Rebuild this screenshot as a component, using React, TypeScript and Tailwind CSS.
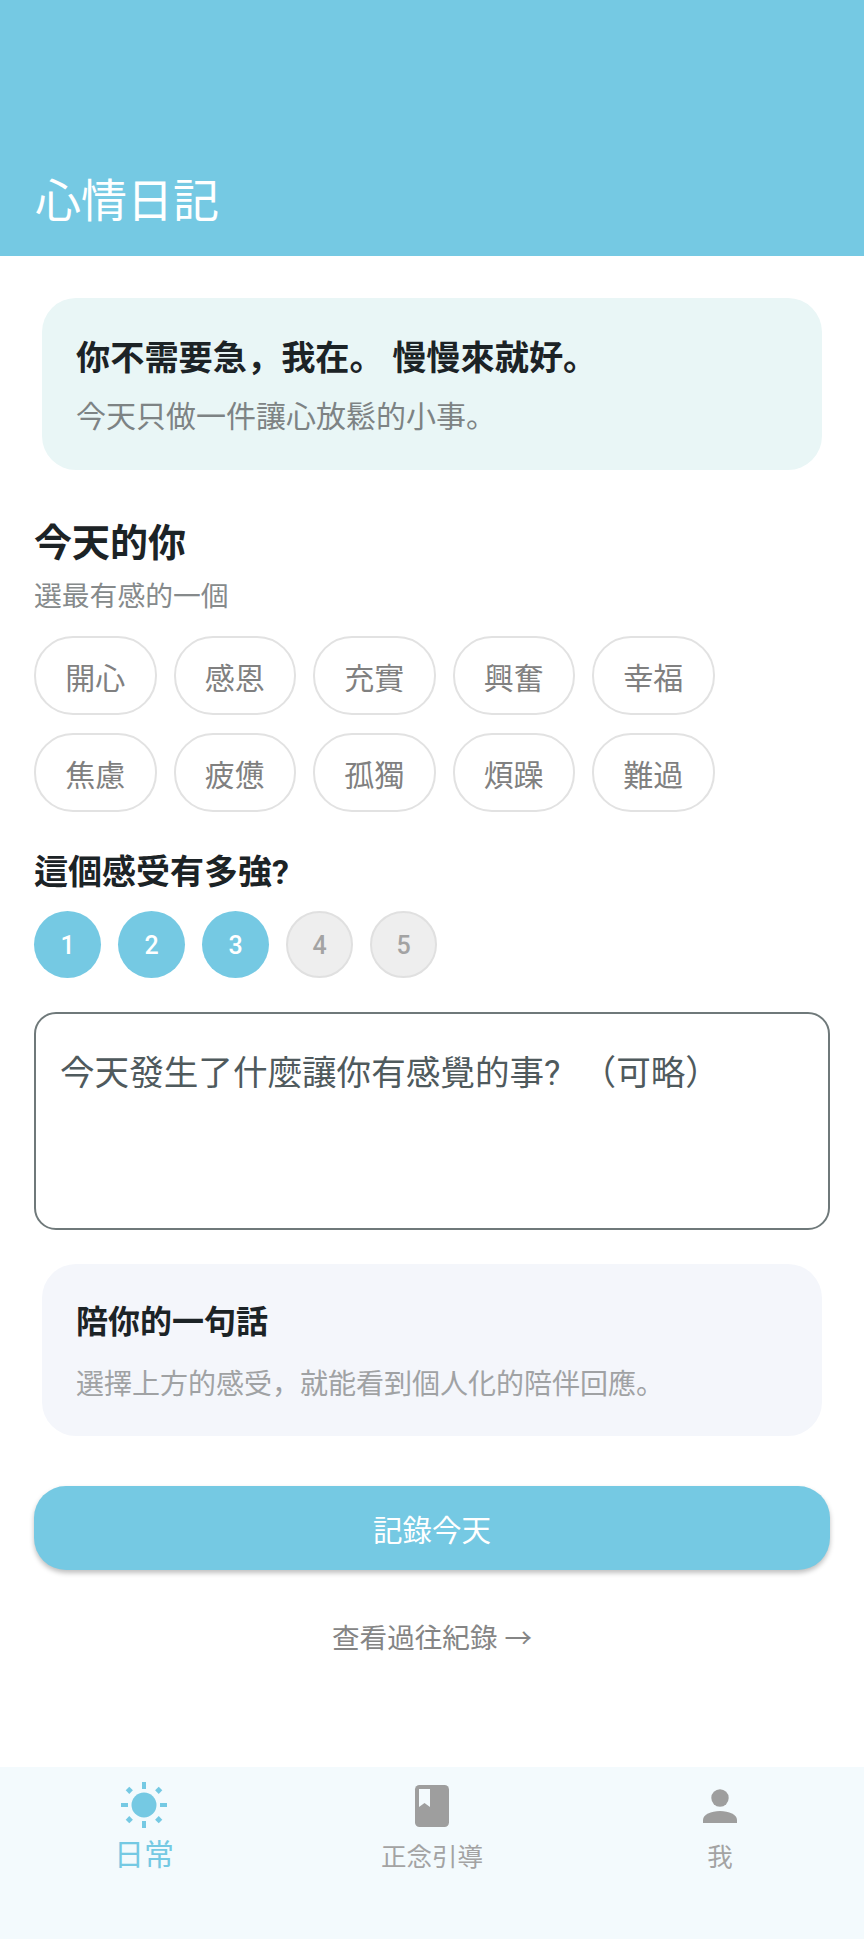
const font = "font-['Roboto','Noto_Sans_CJK_JP',sans-serif]";

const moods = ["開心", "感恩", "充實", "興奮", "幸福", "焦慮", "疲憊", "孤獨", "煩躁", "難過"];

function SunIcon() {
  return (
    <svg width="50" height="50" viewBox="0 0 50 50" fill="#75c9e3">
      <circle cx="25" cy="25" r="12.5" />
      <rect x="23" y="2" width="4" height="7" />
      <rect x="23" y="41" width="4" height="7" />
      <rect x="2" y="23" width="7" height="4" />
      <rect x="41" y="23" width="7" height="4" />
      <path d="M10.3 6.7l3.600 3.600-3.600 3.600-3.600-3.600z" />
      <path d="M39.700 6.700l3.600 3.600-3.600 3.600-3.600-3.600z" />
      <path d="M10.300 36.100l3.600 3.600-3.600 3.600-3.600-3.600z" />
      <path d="M39.700 36.100l3.600 3.600-3.600 3.600-3.600-3.600z" />
    </svg>
  );
}

function BookIcon() {
  return (
    <svg width="50" height="50" viewBox="0 0 50 50">
      <rect x="8" y="5" width="34" height="42" rx="4.500" fill="#9e9e9e" />
      <path d="M12 9h11v18l-5.500-4L12 27z" fill="#f3fafd" />
    </svg>
  );
}

function PersonIcon() {
  return (
    <svg width="50" height="50" viewBox="0 0 50 50" fill="#9e9e9e">
      <circle cx="25" cy="18" r="8.700" />
      <path d="M8 43v-3C8 34.500 16 31 25 31s17 3.500 17 9v3z" />
    </svg>
  );
}

export default function App() {
  return (
    <div className={`${font} flex h-[1939px] w-[864px] flex-col bg-white`}>
      <header className="flex h-[256px] items-end bg-[#75c9e3] pb-[27px] pl-[35px]">
        <h1 className="text-[46px] leading-[56px] font-normal text-white">心情日記</h1>
      </header>

      <main className="flex-1 px-[34px] pt-[42px]">
        <section className="mx-[8px] h-[172px] rounded-[34px] bg-[#e9f6f6] px-[34px] pt-[36px]">
          <p className="text-[34.2px] leading-[48px] font-bold text-[#1c2326]">你不需要急，我在。 慢慢來就好。</p>
          <p className="mt-[15px] text-[30px] leading-[40px] text-[#7d8384]">今天只做一件讓心放鬆的小事。</p>
        </section>

        <h2 className="mt-[48px] text-[38px] leading-[50px] font-bold text-[#1c2326]">今天的你</h2>
        <p className="mt-[10px] text-[27.8px] leading-[38px] text-[#868a8b]">選最有感的一個</p>

        <div className="mt-[20px] flex flex-wrap gap-x-[17px] gap-y-[18px] pr-[80px]">
          {moods.map((m) => (
            <button
              key={m}
              className="flex h-[79px] w-[122.5px] items-center justify-center rounded-[39px] border-2 border-[#e2e2e2] bg-white pt-[6px] text-[30px] text-[#808080]"
            >
              {m}
            </button>
          ))}
        </div>

        <h3 className="mt-[37px] text-[34px] leading-[46px] font-bold text-[#1c2326]">這個感受有多強?</h3>

        <div className="mt-[16px] flex gap-[17px]">
          {[1, 2, 3].map((n) => (
            <div
              key={n}
              className="flex size-[67px] items-center justify-center rounded-full bg-[#75c9e3] pt-[2px] text-[25px] font-medium text-white"
            >
              {n}
            </div>
          ))}
          {[4, 5].map((n) => (
            <div
              key={n}
              className="flex size-[67px] items-center justify-center rounded-full border-2 border-[#e0e0e0] bg-[#eeeeee] pt-[2px] text-[25px] font-medium text-[#a3a3a3]"
            >
              {n}
            </div>
          ))}
        </div>

        <textarea
          readOnly
          placeholder={"今天發生了什麼讓你有感覺的事?\u2002\u200a（可略）"}
          className="mt-[34px] block h-[218px] w-[796px] resize-none rounded-[22px] border-2 border-[#6f797a] bg-white pt-[35px] pl-[24px] text-[34.6px] leading-[48px] outline-none placeholder:text-[#4f5a5d]"
        />

        <section className="mx-[8px] mt-[34px] h-[172px] rounded-[34px] bg-[#f4f6fb] px-[34px] pt-[36px]">
          <p className="text-[32px] leading-[44px] font-bold text-[#1c2326]">陪你的一句話</p>
          <p className="mt-[21px] text-[28px] leading-[40px] text-[#a0a2a4]">選擇上方的感受，就能看到個人化的陪伴回應。</p>
        </section>

        <button className="mt-[50px] flex h-[84px] w-[796px] items-center justify-center rounded-[32px] bg-[#75c9e3] pt-[6px] text-[29.5px] font-normal text-white shadow-[0_3px_5px_rgba(0,0,0,0.25)]">
          記錄今天
        </button>

        <p className="mt-[49px] text-center text-[27.6px] leading-[40px] text-[#858585]">查看過往紀錄 →</p>
      </main>

      <nav className="flex h-[172px] bg-[#f3fafd]">
        <div className="flex w-[288px] flex-col items-center pt-[13px]">
          <SunIcon />
          <span className="mt-[7px] text-[30px] leading-[36px] text-[#75c9e3]">日常</span>
        </div>
        <div className="flex w-[288px] flex-col items-center pt-[13px]">
          <BookIcon />
          <span className="mt-[9px] text-[25.5px] leading-[36px] text-[#a3a3a3]">正念引導</span>
        </div>
        <div className="flex w-[288px] flex-col items-center pt-[13px]">
          <PersonIcon />
          <span className="mt-[9px] text-[25.5px] leading-[36px] text-[#a3a3a3]">我</span>
        </div>
      </nav>
    </div>
  );
}
